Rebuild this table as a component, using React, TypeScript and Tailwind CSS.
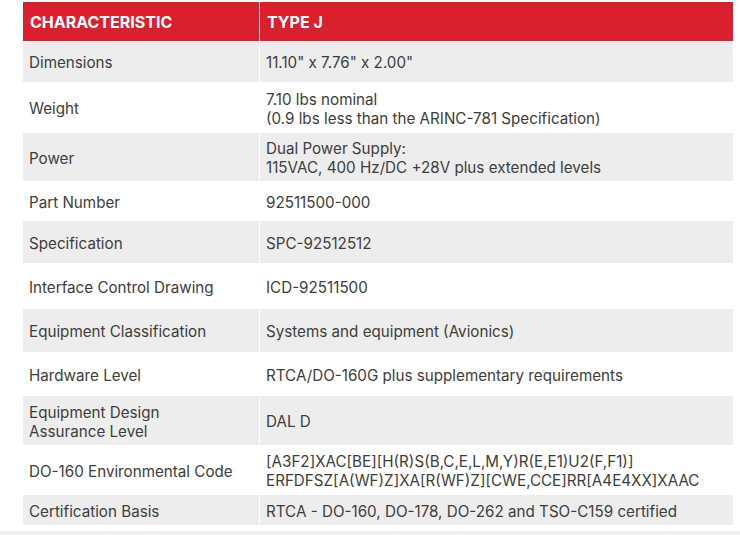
const rows: { label: string[]; value: string[]; h: number; gray: boolean }[] = [
  { label: ['Dimensions'], value: ['11.10" x 7.76" x 2.00"'], h: 41, gray: true },
  { label: ['Weight'], value: ['7.10 lbs nominal', '(0.9 lbs less than the ARINC-781 Specification)'], h: 51, gray: false },
  { label: ['Power'], value: ['Dual Power Supply:', '115VAC, 400 Hz/DC +28V plus extended levels'], h: 48, gray: true },
  { label: ['Part Number'], value: ['92511500-000'], h: 40, gray: false },
  { label: ['Specification'], value: ['SPC-92512512'], h: 42, gray: true },
  { label: ['Interface Control Drawing'], value: ['ICD-92511500'], h: 46, gray: false },
  { label: ['Equipment Classification'], value: ['Systems and equipment (Avionics)'], h: 43, gray: true },
  { label: ['Hardware Level'], value: ['RTCA/DO-160G plus supplementary requirements'], h: 44, gray: false },
  { label: ['Equipment Design', 'Assurance Level'], value: ['DAL D'], h: 49, gray: true },
  { label: ['DO-160 Environmental Code'], value: ['[A3F2]XAC[BE][H(R)S(B,C,E,L,M,Y)R(E,E1)U2(F,F1)]', 'ERFDFSZ[A(WF)Z]XA[R(WF)Z][CWE,CCE]RR[A4E4XX]XAAC'], h: 50, gray: false },
  { label: ['Certification Basis'], value: ['RTCA - DO-160, DO-178, DO-262 and TSO-C159 certified'], h: 30, gray: true },
];

export default function App() {
  return (
    <div className="w-[740px] h-[535px] bg-white overflow-hidden flex flex-col" style={{ fontFamily: 'Inter, "Noto Sans", sans-serif' }}>
      <div className="pl-[23px] pt-[2px] flex-1">
        <div className="w-[710px] text-[15.2px] leading-[19px] text-[#3d3d3d]">
          {/* Header */}
          <div className="grid grid-cols-[236px_1fr] gap-x-px h-[39px] bg-white">
            <div className="bg-[#da1f2f] text-white font-bold text-[16px] flex items-center px-[7px] pt-px">CHARACTERISTIC</div>
            <div className="bg-[#da1f2f] text-white font-bold text-[16px] flex items-center px-[7px] pt-px">TYPE J</div>
          </div>
          {rows.map((r) => (
            <div
              key={r.label.join(' ')}
              className="grid grid-cols-[236px_1fr] gap-x-px bg-white"
              style={{ height: r.h }}
            >
              <div className={`flex flex-col justify-center px-[6px] pt-[2px] ${r.gray ? 'bg-[#ededed]' : 'bg-white'}`}>
                {r.label.map((l) => (
                  <span key={l}>{l}</span>
                ))}
              </div>
              <div className={`flex flex-col justify-center px-[6px] pt-[2px] ${r.gray ? 'bg-[#ededed]' : 'bg-white'}`}>
                {r.value.map((v) => (
                  <span key={v}>{v}</span>
                ))}
              </div>
            </div>
          ))}
        </div>
      </div>
      <div className="h-[4px] bg-[#f0f0f0]" />
    </div>
  );
}
